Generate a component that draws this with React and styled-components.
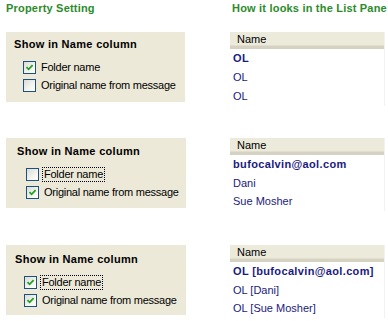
import React from "react";
import styled, { createGlobalStyle } from "styled-components";

const GlobalStyle = createGlobalStyle`
    html, body {
        margin: 0;
        padding: 0;
        background: #ffffff;
    }
    body {
        font-family: "Liberation Sans", Arial, sans-serif;
        font-size: 11px;
    }
`;

const Page = styled.div`
    width: 388px;
    height: 321px;
    overflow: hidden;
    display: flex;
    flex-direction: column;
`;

const Row = styled.div`
    display: grid;
    grid-template-columns: 230px 155px;
    align-items: start;
    height: ${({ $height }) => $height}px;
    margin-top: ${({ $top }) => $top}px;
`;

const ColumnTitle = styled.div`
    color: #2b8b2b;
    font-weight: bold;
    font-size: 11px;
    line-height: 16px;
    letter-spacing: 0.2px;
    white-space: nowrap;
    padding-left: ${({ $indent }) => $indent}px;
`;

const Panel = styled.div`
    margin-left: 6px;
    width: ${({ $width }) => $width}px;
    height: 70px;
    box-sizing: border-box;
    background: #ece9d8;
    padding: ${({ $padTop }) => $padTop}px 0 0 ${({ $indent }) => $indent}px;
`;

const PanelTitle = styled.div`
    font-weight: bold;
    color: #000;
    line-height: 14px;
    letter-spacing: 0.3px;
    margin-bottom: 7px;
    white-space: nowrap;
`;

const Options = styled.div`
    display: flex;
    flex-direction: column;
    padding-left: 9px;
`;

const Option = styled.label`
    display: flex;
    align-items: center;
    height: 18px;
    color: #000;
    white-space: nowrap;
`;

const Box = styled.span`
    width: 13px;
    height: 13px;
    box-sizing: border-box;
    border: 1px solid #1c5180;
    background: linear-gradient(135deg, #dcdcd5 0%, #f4f4f0 60%, #ffffff 100%);
    display: flex;
    align-items: center;
    justify-content: center;
    margin-right: 3px;
    flex-shrink: 0;
`;

const OptionText = styled.span`
    padding: 0 1px;
    line-height: 13px;
    letter-spacing: -0.25px;
    border: 1px dotted ${({ $focused }) => ($focused ? "#000" : "transparent")};
`;

const List = styled.div`
    display: flex;
    flex-direction: column;
    border-right: 1px solid #f2f2f2;
`;

const ListHeader = styled.div`
    height: 17px;
    box-sizing: border-box;
    background: #ebeadb;
    border-bottom: 3px solid #d6d2c2;
    box-shadow: inset 0 -1px 0 #e2decd;
    padding-left: 7px;
    line-height: 14px;
    color: #000;
`;

const ListRow = styled.div`
    height: ${({ $h }) => $h}px;
    line-height: ${({ $h }) => $h}px;
    padding-left: 3px;
    color: #1a1a80;
    font-weight: ${({ $bold }) => ($bold ? "bold" : "normal")};
    letter-spacing: ${({ $bold }) => ($bold ? "0.35px" : "0")};
    white-space: nowrap;
`;

function Check({ checked }) {
    return (
        <Box>
            {checked && (
                <svg width="9" height="9" viewBox="0 0 9 9">
                    <path d="M1.5 4.2 L3.6 6.3 L7.6 2.1" fill="none" stroke="#21a121" strokeWidth="1.8" />
                </svg>
            )}
        </Box>
    );
}

const examples = [
    {
        top: 16,
        panel: { padTop: 5, indent: 8, width: 179 },
        folder: true,
        original: false,
        focused: false,
        rowHeight: 19,
        rows: ["OL", "OL", "OL"],
    },
    {
        top: 36,
        panel: { padTop: 6, indent: 11, width: 180 },
        folder: false,
        original: true,
        focused: true,
        rowHeight: 18.5,
        rows: ["bufocalvin@aol.com", "Dani", "Sue Mosher"],
    },
    {
        top: 37,
        panel: { padTop: 7, indent: 9, width: 180 },
        folder: true,
        original: true,
        focused: true,
        rowHeight: 18.5,
        rows: ["OL [bufocalvin@aol.com]", "OL [Dani]", "OL [Sue Mosher]"],
    },
];

export default function App() {
    return (
        <Page>
            <GlobalStyle />
            <Row $top={0} $height={16}>
                <ColumnTitle $indent={6}>Property Setting</ColumnTitle>
                <ColumnTitle $indent={2}>How it looks in the List Pane</ColumnTitle>
            </Row>
            {examples.map((ex, i) => (
                <Row key={i} $top={ex.top} $height={70}>
                    <Panel $padTop={ex.panel.padTop} $indent={ex.panel.indent} $width={ex.panel.width}>
                        <PanelTitle>Show in Name column</PanelTitle>
                        <Options>
                            <Option>
                                <Check checked={ex.folder} />
                                <OptionText $focused={ex.focused}>Folder name</OptionText>
                            </Option>
                            <Option>
                                <Check checked={ex.original} />
                                <OptionText>Original name from message</OptionText>
                            </Option>
                        </Options>
                    </Panel>
                    <List>
                        <ListHeader>Name</ListHeader>
                        {ex.rows.map((r, j) => (
                            <ListRow key={j} $bold={j === 0} $h={ex.rowHeight}>
                                {r}
                            </ListRow>
                        ))}
                    </List>
                </Row>
            ))}
        </Page>
    );
}
